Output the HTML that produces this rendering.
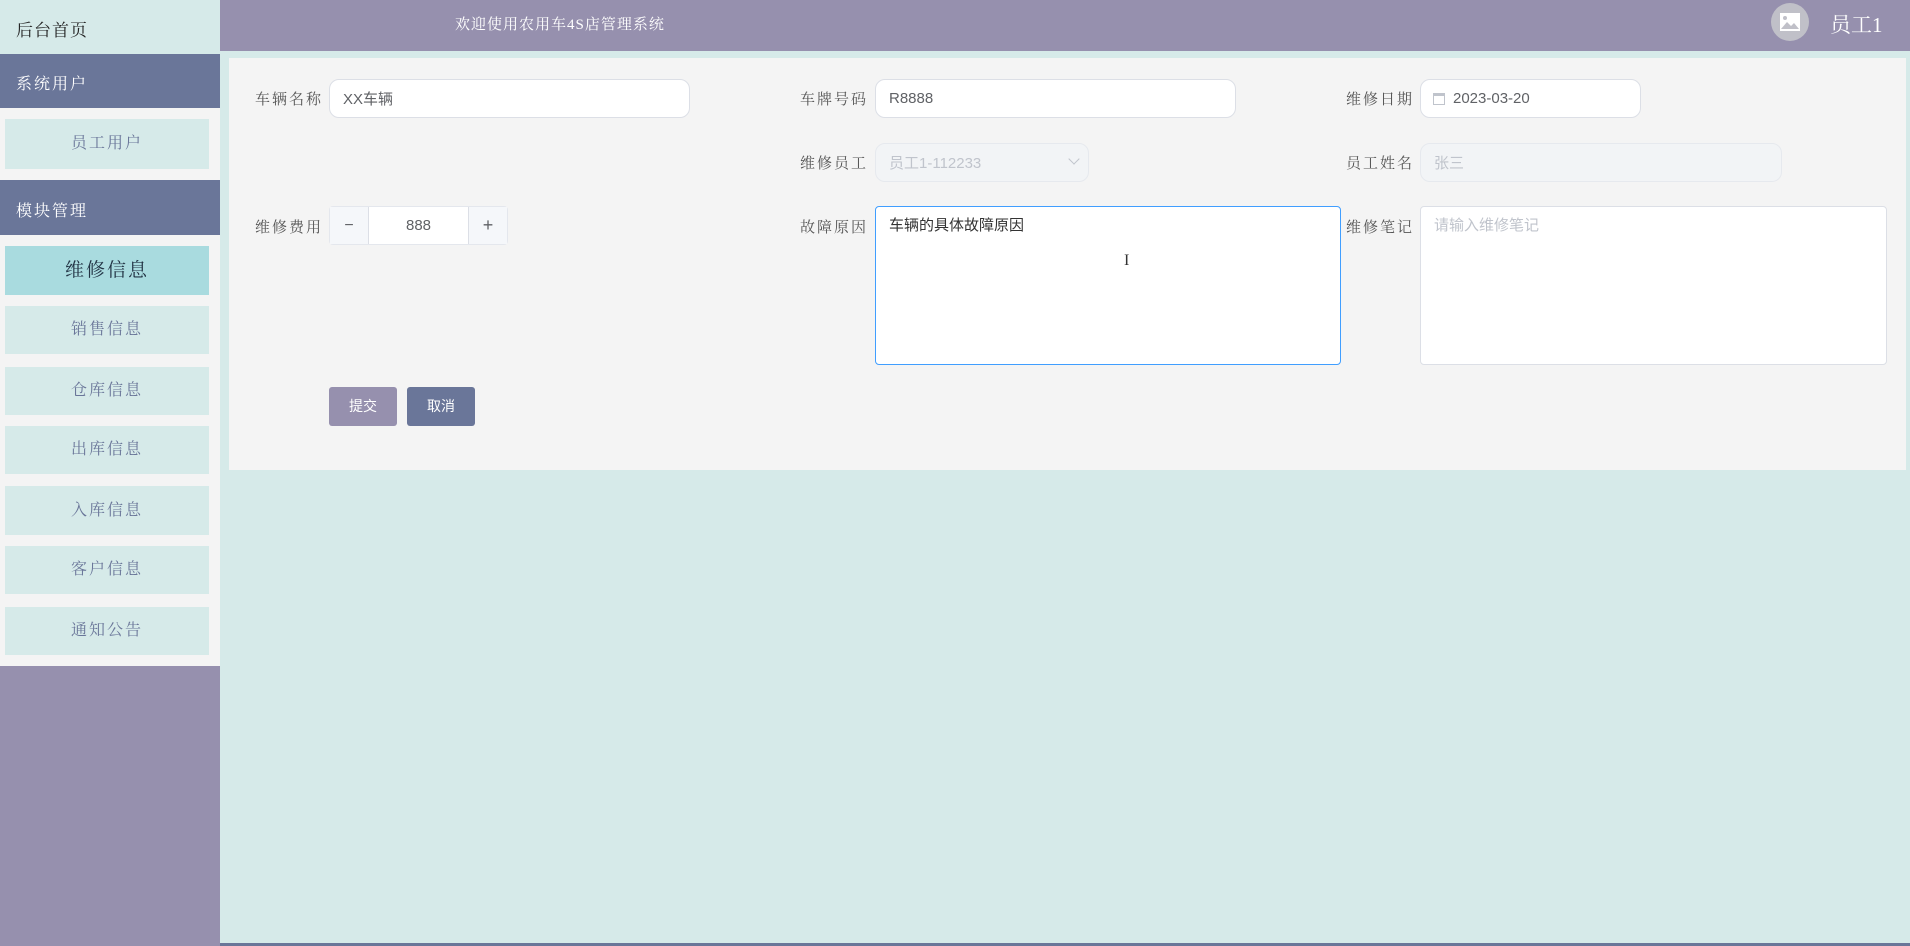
<!DOCTYPE html>
<html><head><meta charset="utf-8"><style>
*{box-sizing:border-box;margin:0;padding:0}
body{width:1910px;height:946px;background:#d6eae9;position:relative;overflow:hidden;font-family:"Liberation Sans","Noto Sans CJK SC",sans-serif}
.a{position:absolute}
.serif{font-family:"Liberation Serif","Noto Serif CJK SC",serif}
.side{left:0;top:0;width:220px;height:946px;background:#9690ae}
.it{position:absolute;left:5px;width:204px;background:#d6eae9;color:#6a7699;text-align:center;font-size:16px;letter-spacing:2px}
.lbl{position:absolute;font-size:15px;color:#555;letter-spacing:2px}
.inp{position:absolute;background:#fff;border:1px solid #dcdfe6;border-radius:10px;font-size:15px;color:#606266;padding-left:13px;display:flex;align-items:center}
.dis{background:#f2f4f6;border-color:#e6e9ee;color:#c0c4cc}
</style></head><body>
<div class="a side">
 <div class="a serif" style="left:0;top:0;width:220px;height:54px;background:#d6eae9;font-size:17px;color:#222;padding:16px 0 0 16px;letter-spacing:1px">后台首页</div>
 <div class="a serif" style="left:0;top:54px;width:220px;height:612px;background:#f4f4f4"></div>
 <div class="a serif" style="left:0;top:54px;width:220px;height:54px;background:#6a7699;color:#fff;font-size:16px;padding:17px 0 0 16px;letter-spacing:2px">系统用户</div>
 <div class="it serif" style="top:119px;height:50px;line-height:50px">员工用户</div>
 <div class="a serif" style="left:0;top:180px;width:220px;height:55px;background:#6a7699;color:#fff;font-size:16px;padding:18px 0 0 16px;letter-spacing:2px">模块管理</div>
 <div class="it serif" style="top:246px;height:49px;line-height:49px;background:#a9dbdf;color:#234;font-size:19px">维修信息</div>
 <div class="it serif" style="top:306px;height:48px;line-height:48px">销售信息</div>
 <div class="it serif" style="top:367px;height:48px;line-height:48px">仓库信息</div>
 <div class="it serif" style="top:426px;height:48px;line-height:48px">出库信息</div>
 <div class="it serif" style="top:486px;height:49px;line-height:49px">入库信息</div>
 <div class="it serif" style="top:546px;height:48px;line-height:48px">客户信息</div>
 <div class="it serif" style="top:607px;height:48px;line-height:48px">通知公告</div>
</div>
<div class="a" style="left:220px;top:0;width:1690px;height:51px;background:#9690ae"></div>
<div class="a serif" style="left:455px;top:13px;color:#fff;font-size:15px;letter-spacing:1px">欢迎使用农用车4S店管理系统</div>
<div class="a" style="left:1771px;top:3px;width:38px;height:38px;border-radius:50%;background:#c0c0c8"></div>
<svg class="a" style="left:1779px;top:12px" width="22" height="20" viewBox="0 0 22 20"><rect x="1" y="1" width="20" height="18" fill="#fff"/><circle cx="6" cy="6" r="2" fill="#c0c0c8"/><path d="M2 17 L8 10 L12 14 L15 11 L20 17Z" fill="#c0c0c8"/></svg>
<div class="a serif" style="left:1830px;top:9px;color:#fff;font-size:21px">员工1</div>

<div class="a" style="left:229px;top:58px;width:1677px;height:412px;background:#f4f4f4"></div>

<div class="lbl serif" style="left:255px;top:88px">车辆名称</div>
<div class="inp" style="left:329px;top:79px;width:361px;height:39px">XX车辆</div>
<div class="lbl serif" style="left:800px;top:88px">车牌号码</div>
<div class="inp" style="left:875px;top:79px;width:361px;height:39px">R8888</div>
<div class="lbl serif" style="left:1346px;top:88px">维修日期</div>
<div class="inp" style="left:1420px;top:79px;width:221px;height:39px;padding-left:12px"><span style="display:inline-block;width:12px;height:12px;border:1px solid #c0c4cc;border-top-width:3px;margin-right:8px"></span>2023-03-20</div>

<div class="lbl serif" style="left:800px;top:152px">维修员工</div>
<div class="inp dis" style="left:875px;top:143px;width:214px;height:39px">员工1-112233<span style="position:absolute;right:10px;top:11px;width:8px;height:8px;border-right:1px solid #c0c4cc;border-bottom:1px solid #c0c4cc;transform:rotate(45deg)"></span></div>
<div class="lbl serif" style="left:1346px;top:152px">员工姓名</div>
<div class="inp dis" style="left:1420px;top:143px;width:362px;height:39px">张三</div>

<div class="lbl serif" style="left:255px;top:216px">维修费用</div>
<div class="a" style="left:329px;top:206px;width:179px;height:39px;border:1px solid #e4e7ed;background:#fff;border-radius:4px"></div>
<div class="a" style="left:330px;top:207px;width:39px;height:37px;background:#f5f7fa;border-right:1px solid #dcdfe6;color:#606266;text-align:center;line-height:37px;font-size:16px">−</div>
<div class="a" style="left:468px;top:207px;width:39px;height:37px;background:#f5f7fa;border-left:1px solid #dcdfe6;color:#606266;text-align:center;line-height:37px;font-size:18px">+</div>
<div class="a" style="left:369px;top:207px;width:99px;height:37px;text-align:center;line-height:37px;font-size:15px;color:#606266">888</div>

<div class="lbl serif" style="left:800px;top:216px">故障原因</div>
<div class="inp" style="left:875px;top:206px;width:466px;height:159px;border-color:#409eff;border-radius:4px;align-items:flex-start;padding-top:7px;color:#333">车辆的具体故障原因</div>
<div class="a" style="left:1124px;top:252px;font-size:16px;color:#333;font-family:'Liberation Serif',serif">I</div>
<div class="lbl serif" style="left:1346px;top:216px">维修笔记</div>
<div class="inp" style="left:1420px;top:206px;width:467px;height:159px;border-radius:4px;align-items:flex-start;padding-top:7px;color:#c0c4cc">请输入维修笔记</div>

<div class="a" style="left:329px;top:387px;width:68px;height:39px;background:#9690ae;border-radius:3px;color:#fff;font-size:14px;text-align:center;line-height:39px">提交</div>
<div class="a" style="left:407px;top:387px;width:68px;height:39px;background:#6a7699;border-radius:3px;color:#fff;font-size:14px;text-align:center;line-height:39px">取消</div>
<div class="a" style="left:220px;top:943px;width:1690px;height:3px;background:#6a7699"></div>
</body></html>
